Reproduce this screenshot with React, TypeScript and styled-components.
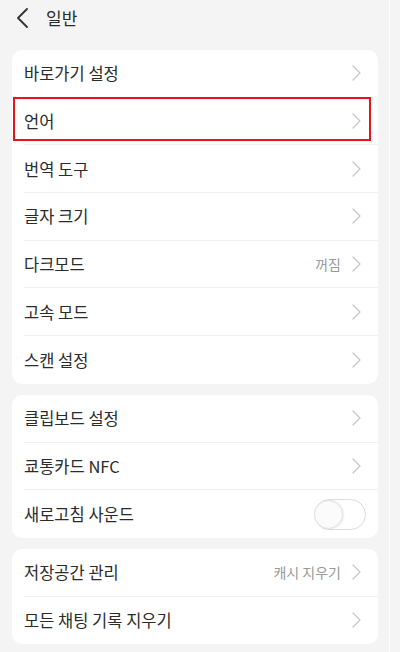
import styled, { createGlobalStyle } from 'styled-components';

const GlobalStyle = createGlobalStyle`
  html, body {
    margin: 0;
    padding: 0;
    background: #f4f4f4;
  }
  body {
    font-family: 'Noto Sans CJK KR', 'Noto Sans', sans-serif;
    color: #2b2b2b;
  }
`;

type Row = {
  label: string;
  value?: string;
  toggle?: boolean;
  marked?: boolean;
};

const groups: Row[][] = [
  [
    { label: '바로가기 설정' },
    { label: '언어', marked: true },
    { label: '번역 도구' },
    { label: '글자 크기' },
    { label: '다크모드', value: '꺼짐' },
    { label: '고속 모드' },
    { label: '스캔 설정' },
  ],
  [{ label: '클립보드 설정' }, { label: '쿄통카드 NFC' }, { label: '새로고침 사운드', toggle: true }],
  [{ label: '저장공간 관리', value: '캐시 지우기' }, { label: '모든 채팅 기록 지우기' }],
];

const Screen = styled.div`
  display: flex;
  width: 400px;
  height: 652px;
  overflow: hidden;
  background: #f4f4f4;
`;

const Main = styled.div`
  width: 389px;
  display: flex;
  flex-direction: column;
`;

const ScrollTrack = styled.div`
  width: 10px;
  border-left: 1px solid #ffffff;
  background: #f4f4f4;
`;

const Header = styled.div`
  height: 35px;
  display: flex;
  align-items: center;
  padding-left: 16px;
  gap: 18px;
  margin-bottom: 15px;
`;

const Title = styled.span`
  font-size: 17px;
  color: #2b2b2b;
  line-height: 1;
`;

const List = styled.div`
  display: flex;
  flex-direction: column;
  gap: 11px;
  padding: 0 11px 0 12px;
`;

const Card = styled.div`
  background: #ffffff;
  border-radius: 10px;
`;

const Item = styled.div<{ $last: boolean }>`
  position: relative;
  height: 47.7px;
  display: flex;
  align-items: center;
  margin-left: 12px;
  padding-right: 17px;
  box-sizing: border-box;
  border-bottom: ${(p) => (p.$last ? 'none' : '1px solid #f0f0f0')};
`;

const Label = styled.span`
  flex: 1;
  font-size: 16.5px;
  color: #2b2b2b;
`;

const Value = styled.span`
  font-size: 14px;
  color: #999;
  margin-right: 11px;
`;

const Mark = styled.div`
  position: absolute;
  left: -11px;
  top: -1px;
  width: 358px;
  height: 44px;
  box-sizing: border-box;
  border: 2px solid #e8121b;
  pointer-events: none;
`;

const Toggle = styled.div`
  width: 52px;
  height: 31px;
  box-sizing: border-box;
  border: 1.5px solid #dcdcdc;
  border-radius: 16px;
  margin-right: -5px;
  display: flex;
  align-items: center;
`;

const Knob = styled.div`
  width: 29px;
  height: 29px;
  box-sizing: border-box;
  border-radius: 50%;
  background: #fbfbfb;
  border: 1px solid #e2e2e2;
  box-shadow: 1px 0 2px rgba(0, 0, 0, 0.08);
  margin-left: -1px;
`;

const Chevron = () => (
  <svg width="9" height="16" viewBox="0 0 9 16" fill="none">
    <path d="M1 1l7 7-7 7" stroke="#c6c6c6" strokeWidth="1.2" strokeLinecap="round" strokeLinejoin="round" />
  </svg>
);

const BackIcon = () => (
  <svg width="12" height="20" viewBox="0 0 12 20" fill="none">
    <path d="M11 1L2 10l9 9" stroke="#333" strokeWidth="1.8" strokeLinecap="round" strokeLinejoin="round" />
  </svg>
);

function App() {
  return (
    <Screen>
      <GlobalStyle />
      <Main>
        <Header>
          <BackIcon />
          <Title>일반</Title>
        </Header>
        <List>
          {groups.map((rows, gi) => (
            <Card key={gi}>
              {rows.map((row, i) => (
                <Item key={row.label} $last={i === rows.length - 1}>
                  <Label>{row.label}</Label>
                  {row.value && <Value>{row.value}</Value>}
                  {row.toggle ? (
                    <Toggle>
                      <Knob />
                    </Toggle>
                  ) : (
                    <Chevron />
                  )}
                  {row.marked && <Mark />}
                </Item>
              ))}
            </Card>
          ))}
        </List>
      </Main>
      <ScrollTrack />
    </Screen>
  );
}

export default App;
